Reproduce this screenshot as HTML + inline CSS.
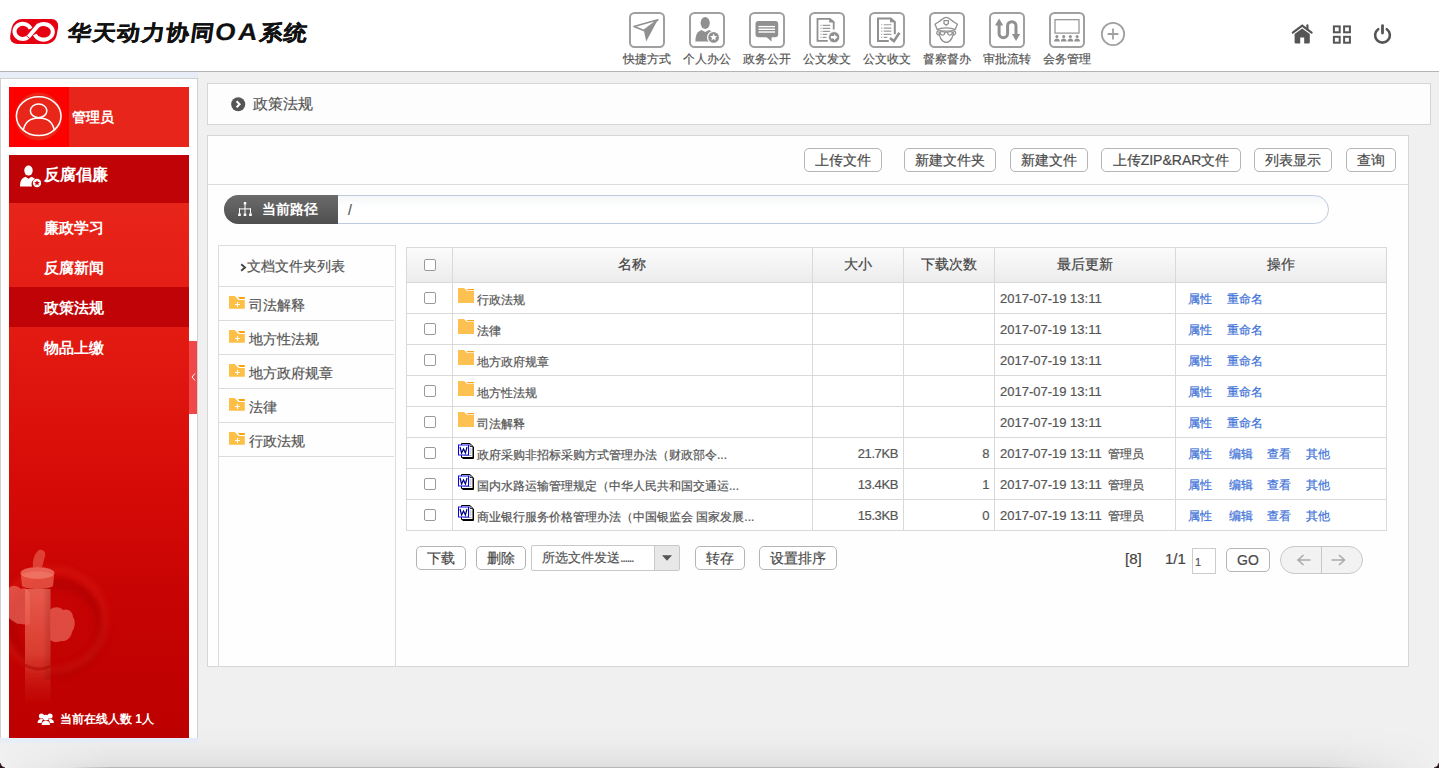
<!DOCTYPE html>
<html><head><meta charset="utf-8">
<style>
*{box-sizing:border-box}
html,body{margin:0;padding:0}
body{width:1439px;height:768px;overflow:hidden;position:relative;background:#f0f0f0;font-family:"Liberation Sans",sans-serif;color:#555;-webkit-text-stroke:0.2px currentColor}
.abs{position:absolute}
#hdr{left:0;top:0;width:1439px;height:71px;background:#fff}
#hdrline{left:0;top:71px;width:1439px;height:1px;background:#b4b4b4}
.nav{position:absolute;top:12px;width:60px;text-align:center}
.nav .ib{position:absolute;left:12px;top:0;width:36px;height:36px;border:2px solid #a0a0a0;border-radius:5.5px}
.nav .lb{position:absolute;left:0;top:40px;width:60px;font-size:12px;line-height:14px;color:#555;white-space:nowrap;text-align:center}
.nav svg{position:absolute;left:0;top:0}
#band{left:0;top:72px;width:198px;height:671px;background:#e8eef8}
#lp{left:0;top:78px;width:198px;height:660px;background:#fff;border:1px solid #d0d0d0;border-bottom:0}
.red{position:absolute;left:9px;width:180px}
#rtop{top:87px;height:60px;background:#e8251a}
#ravatar{left:9px;top:87px;width:60px;height:60px;background:#fe0000}
#rsec{top:155px;height:48px;background:#c00306}
#rsub{top:203px;height:535px;background:linear-gradient(to bottom,#e8251a 0%,#e21a12 25%,#d80c08 50%,#c60303 75%,#bd0000 100%)}
.sm{position:absolute;left:44px;font-size:15px;font-weight:bold;color:#fff;line-height:20px;white-space:nowrap;-webkit-text-stroke:0}
#bc{left:207px;top:83px;width:1224px;height:42px;background:#fdfdfd;border:1px solid #d6d6d6}
#main{left:207px;top:135px;width:1202px;height:532px;background:#fefefe;border:1px solid #d6d6d6}
.btn{position:absolute;height:24px;border:1px solid #b4b4b4;border-radius:5px;background:#fff;font-size:14px;line-height:22px;color:#4a4a4a;text-align:center;white-space:nowrap}
.th{position:absolute;font-size:14px;line-height:20px;color:#444;text-align:center;white-space:nowrap}
.td{position:absolute;font-size:12px;line-height:18px;color:#555;white-space:nowrap}
.lk{color:#3d72d8}
.num{font-size:13px;line-height:20px;letter-spacing:-0.4px}
.dt{font-size:13px;line-height:20px}
.cb{position:absolute;width:12px;height:12px;border:1px solid #9a9a9a;border-radius:2px;background:#fff}
</style></head><body>
<div id="hdr" class="abs"></div>
<div id="hdrline" class="abs"></div>

<svg class="abs" style="left:8px;top:19px" width="52" height="26" viewBox="-1 0 52 26">
 <g transform="translate(5,0) skewX(-11)"><rect x="-0.6" y="0.1" width="46.4" height="24.8" rx="8.5" fill="#e50012"/></g>
 <g fill="none" stroke-linecap="butt">
  <path d="M21.6 9.8 A8.3 7.6 0 1 0 19.1 18.2" stroke="#fff" stroke-width="4"/>
  <path d="M21.2 15.7 L26.5 9.5" stroke="#e50012" stroke-width="5.6"/>
  <path d="M19.1 18.2 L29.2 6.4 A9.3 7.8 0 1 1 25.8 15.5" stroke="#fff" stroke-width="4"/>
  <path d="M17.3 16.7 L20.9 19.7" stroke="#e50012" stroke-width="0.8"/>
 </g>
</svg>
<div class="abs" style="left:66px;top:18px;font-size:21px;line-height:28px;font-weight:bold;color:#111;white-space:nowrap;letter-spacing:1.3px;transform:skewX(-8deg) scaleX(1.1);transform-origin:0 100%;-webkit-text-stroke:0.35px #111">华天动力协同<span style="font-size:24px;letter-spacing:2.2px;-webkit-text-stroke:0.2px #111">OA</span>系统</div>

<div class="nav" style="left:617px"><div class="ib"></div><svg style="left:12px" width="36" height="36" viewBox="0 0 36 36">
 <path d="M28.8 7.8 L5 14.6 L14.9 18.4 Z" fill="none" stroke="#909090" stroke-width="1.6" stroke-linejoin="round"/>
 <path d="M28.8 7.8 L14.9 18.4 L17.2 29.6 Z" fill="#909090"/>
</svg><div class="lb">快捷方式</div></div>

<div class="nav" style="left:677px"><div class="ib"></div><svg style="left:12px" width="36" height="36" viewBox="0 0 36 36">
 <ellipse cx="16.2" cy="11" rx="4.6" ry="6" fill="#909090"/>
 <path d="M6.4 29.6 C6.6 22 8.5 19.6 12.5 18 L16.2 20 L20 18 C23.5 19.2 25 20.5 25.5 23 L25.5 29.6 Z" fill="#909090"/>
 <circle cx="24.6" cy="25.4" r="6" fill="#909090" stroke="#fff" stroke-width="1.3"/>
 <path d="M24.6 21.6 L25.6 24.1 L28.2 24.2 L26.2 25.9 L26.9 28.5 L24.6 27 L22.3 28.5 L23 25.9 L21 24.2 L23.6 24.1 Z" fill="#fff"/>
</svg><div class="lb">个人办公</div></div>

<div class="nav" style="left:737px"><div class="ib"></div><svg style="left:12px" width="36" height="36" viewBox="0 0 36 36">
 <rect x="6.5" y="9" width="22.7" height="16.2" rx="3" fill="#909090"/>
 <path d="M17.2 24.8 L22.4 29.5 L22.7 24.8 Z" fill="#909090"/>
 <rect x="9.5" y="13.9" width="16.5" height="1.4" fill="#fff"/><rect x="9.5" y="16.6" width="16.5" height="1.4" fill="#fff"/><rect x="9.5" y="19.3" width="16.5" height="1.4" fill="#fff"/>
</svg><div class="lb">政务公开</div></div>

<div class="nav" style="left:797px"><div class="ib"></div><svg style="left:12px" width="36" height="36" viewBox="0 0 36 36">
 <path d="M24.7 17.6 V10 L20.8 6.9 H8.5 V28.9 H18.8" fill="none" stroke="#909090" stroke-width="1.8"/>
 <path d="M20.2 6 L25.6 10.4 H20.2 Z" fill="#909090"/>
 <g stroke="#9a9a9a" stroke-width="1.1"><path d="M11.4 13.4 h1.2 M11.4 16.4 h1.2 M11.4 19.4 h1.2 M11.4 22.4 h1.2 M11.4 25.4 h1.2" stroke="#b0b0b0"/>
 <path d="M13.6 13.4 H21.3 M13.6 16.4 H21.3 M13.6 19.4 H21 M13.6 22.4 H18.3 M13.6 25.4 H17.5"/></g>
 <circle cx="25.1" cy="25.2" r="5.6" fill="#909090" stroke="#fff" stroke-width="0.8"/>
 <path d="M21.8 24 H25 V22.2 L28.5 25.2 L25 28.2 V26.4 H21.8 Z" fill="#fff"/>
</svg><div class="lb">公文发文</div></div>

<div class="nav" style="left:857px"><div class="ib"></div><svg style="left:12px" width="36" height="36" viewBox="0 0 36 36">
 <path d="M25.8 22.2 V10 L21.6 6.5 H9 V28.9 H19.8" fill="none" stroke="#909090" stroke-width="2"/>
 <path d="M21 5.5 L26.6 10.2 H21 Z" fill="#909090"/>
 <g stroke-width="1.1"><path d="M12 12.8 h1.4 M12 16.1 h1.4 M12 19.1 h1.4 M12 22.4 h1.4 M12 25.4 h1.4" stroke="#b8b8b8"/>
 <path d="M14.7 12.8 H22.4 M14.7 16.1 H22.4 M14.7 19.1 H22.4 M14.7 22.4 H22.4 M14.7 25.4 H18.3" stroke="#9a9a9a"/></g>
 <path d="M21 26 L24.9 29.2 L30.4 20.8" fill="none" stroke="#fff" stroke-width="4.2"/>
 <path d="M21 26 L24.9 29.2 L30.4 20.8" fill="none" stroke="#909090" stroke-width="2.6"/>
</svg><div class="lb">公文收文</div></div>

<div class="nav" style="left:917px"><div class="ib"></div><svg style="left:12px" width="36" height="36" viewBox="0 0 36 36">
 <g fill="none" stroke="#909090" stroke-width="1.3" stroke-linejoin="round">
 <path d="M6 12.3 C8.2 10.6 10.4 9.8 12.2 8 C14 6.2 15.5 5.3 17.2 5.3 C18.9 5.3 20.4 6.2 22.2 8 C24 9.8 26.2 10.6 28.4 12.3 L26.2 17.5 C22 15.3 12.4 15.3 8.2 17.5 Z"/>
 <path d="M15 8.6 H19.4 V11.4 L17.2 13.2 L15 11.4 Z"/>
 <path d="M8.2 17.5 C12.4 19.8 22 19.8 26.2 17.5"/>
 <path d="M9.6 19 C8 19 7.4 20.6 8 21.8 C8.4 22.8 9.6 23.2 10.4 22.8 M24.8 19 C26.4 19 27 20.6 26.4 21.8 C26 22.8 24.8 23.2 24 22.8"/>
 <path d="M10 19.4 C10 24 12 29.6 17.2 30.4 C22.4 29.6 24.4 24 24.4 19.4"/>
 <path d="M11 20 C11 23.6 15.6 24.4 15.8 20.6 C15.8 19.8 14.5 19.6 13 19.6 C11.8 19.6 11 19.7 11 20 Z M23.4 20 C23.4 23.6 18.8 24.4 18.6 20.6 C18.6 19.8 19.9 19.6 21.4 19.6 C22.6 19.6 23.4 19.7 23.4 20 Z M15.8 20.4 C16.6 20 17.8 20 18.6 20.4"/>
 </g>
</svg><div class="lb">督察督办</div></div>

<div class="nav" style="left:977px"><div class="ib"></div><svg style="left:12px" width="36" height="36" viewBox="0 0 36 36">
 <path d="M10.1 12.5 V21.55 A4.25 4.25 0 0 0 18.6 21.55 V13.9 A4.2 4.2 0 0 1 27 13.9 V22.6" fill="none" stroke="#909090" stroke-width="3"/>
 <path d="M6 13.4 L10.1 6.6 L14.2 13.4 Z" fill="#909090"/>
 <path d="M23 22.1 L27 28.9 L31.2 22.1 Z" fill="#909090"/>
</svg><div class="lb">审批流转</div></div>

<div class="nav" style="left:1037px"><div class="ib"></div><svg style="left:12px" width="36" height="36" viewBox="0 0 36 36">
 <rect x="6" y="7.7" width="24" height="13.4" fill="none" stroke="#909090" stroke-width="1.2"/>
 <g fill="#909090"><circle cx="7.9" cy="24.4" r="1.5"/><path d="M5.0 29.4 C5.3 27.4 6.3 26.6 7.9 26.6 C9.5 26.6 10.5 27.4 10.8 29.4 Z"/><circle cx="14.7" cy="24.4" r="1.5"/><path d="M11.8 29.4 C12.1 27.4 13.1 26.6 14.7 26.6 C16.3 26.6 17.3 27.4 17.6 29.4 Z"/><circle cx="21.4" cy="24.4" r="1.5"/><path d="M18.5 29.4 C18.8 27.4 19.8 26.6 21.4 26.6 C23.0 26.6 24.0 27.4 24.3 29.4 Z"/><circle cx="28.1" cy="24.4" r="1.5"/><path d="M25.2 29.4 C25.5 27.4 26.5 26.6 28.1 26.6 C29.7 26.6 30.7 27.4 31.0 29.4 Z"/></g>
</svg><div class="lb">会务管理</div></div>

<svg class="abs" style="left:1100px;top:21px" width="26" height="26" viewBox="0 0 26 26">
 <circle cx="13" cy="13" r="11.2" fill="none" stroke="#a0a0a0" stroke-width="1.8"/>
 <path d="M13 7.6 V18.4 M7.6 13 H18.4" stroke="#a0a0a0" stroke-width="1.8"/>
</svg>

<svg class="abs" style="left:1291px;top:24px" width="24" height="21" viewBox="0 0 24 21">
 <path d="M1.8 8.6 L11.2 1.6 L20.6 8.6" fill="none" stroke="#555" stroke-width="2.2" stroke-linecap="round"/>
 <path d="M16.4 1.4 V5.6" stroke="#555" stroke-width="2.2" stroke-linecap="round"/>
 <path d="M3.6 10 L11.2 4.4 L18.8 10 V18.2 Q18.8 19.6 17.4 19.6 H13.2 V13.6 H9.2 V19.6 H5 Q3.6 19.6 3.6 18.2 Z" fill="#555"/>
</svg>
<svg class="abs" style="left:1332px;top:25px" width="21" height="20" viewBox="0 0 21 20">
 <g fill="none" stroke="#555" stroke-width="2">
  <rect x="1.9" y="1.4" width="5.8" height="5.9"/><rect x="12.1" y="1.4" width="5.8" height="5.9"/>
  <rect x="1.9" y="11.8" width="5.8" height="5.9"/><rect x="12.1" y="11.8" width="5.8" height="5.9"/>
 </g>
</svg>
<svg class="abs" style="left:1373px;top:24px" width="20" height="21" viewBox="0 0 20 21">
 <path d="M5.2 5.2 A7.4 7.4 0 1 0 13.8 5.2" fill="none" stroke="#555" stroke-width="2.6" stroke-linecap="round"/>
 <path d="M9.5 1.6 V9" stroke="#555" stroke-width="2.8" stroke-linecap="round"/>
</svg>

<div id="band" class="abs"></div>
<div id="lp" class="abs"></div>
<div id="rtop" class="red"></div>
<div id="ravatar" class="abs"></div>
<div id="rsec" class="red"></div>
<div id="rsub" class="red"></div>

<svg class="abs" style="left:9px;top:87px" width="60" height="60" viewBox="0 0 60 60">
 <ellipse cx="29.7" cy="29.6" rx="23.6" ry="24" fill="#e8271a"/>
 <ellipse cx="29.7" cy="29.1" rx="22.3" ry="19.4" fill="none" stroke="#fff" stroke-width="1.5"/>
 <ellipse cx="29.6" cy="23.8" rx="8.25" ry="6.85" fill="none" stroke="#fff" stroke-width="1.5"/>
 <path d="M14.4 42.6 C16.2 34.4 22 30.9 29.8 30.9 C37.6 30.9 43.4 34.4 45.2 42.6" fill="none" stroke="#fff" stroke-width="1.5"/>
</svg>
<div class="abs" style="left:72px;top:107px;font-size:14px;line-height:20px;font-weight:bold;color:#fff;-webkit-text-stroke:0">管理员</div>
<svg class="abs" style="left:19px;top:165px" width="22" height="23" viewBox="0 0 22 23">
 <ellipse cx="9.5" cy="5.6" rx="4.2" ry="5" fill="#fff"/>
 <path d="M1 21.5 C1 15 3.5 12.6 6.6 11.8 L9.5 13.8 L12.4 11.8 C14 12.3 15.2 13 16 14 A5.6 5.6 0 0 0 13 21.5 Z" fill="#fff"/>
 <circle cx="18" cy="18" r="4.2" fill="#fff"/>
 <path d="M18 15.2 L18.8 17.1 L20.8 17.2 L19.3 18.5 L19.8 20.4 L18 19.3 L16.2 20.4 L16.7 18.5 L15.2 17.2 L17.2 17.1 Z" fill="#c00306"/>
</svg>
<div class="abs" style="left:44px;top:164px;font-size:16px;line-height:22px;font-weight:bold;color:#fff;-webkit-text-stroke:0">反腐倡廉</div>
<div class="abs" style="left:9px;top:287px;width:180px;height:40px;background:#c00306"></div>
<svg class="abs" style="left:9px;top:520px" width="180" height="218" viewBox="0 0 180 218">
 <defs>
  <filter id="bl" x="-50%" y="-50%" width="200%" height="200%"><feGaussianBlur stdDeviation="3"/></filter>
  <filter id="bl2" x="-20%" y="-20%" width="140%" height="140%"><feGaussianBlur stdDeviation="0.6"/></filter>
  <linearGradient id="pg" x1="0" y1="0" x2="0" y2="1"><stop offset="0" stop-color="#f07060"/><stop offset="0.5" stop-color="#e04a3a"/><stop offset="0.92" stop-color="#c81a10" stop-opacity="0"/></linearGradient>
  <linearGradient id="ph" x1="0" y1="0" x2="1" y2="0"><stop offset="0" stop-color="#000" stop-opacity="0"/><stop offset="0.7" stop-color="#000" stop-opacity="0"/><stop offset="1" stop-color="#800" stop-opacity="0.35"/></linearGradient>
 </defs>
 <ellipse cx="48" cy="108" rx="44" ry="44" fill="none" stroke="#a80000" stroke-width="10" opacity="0.55" filter="url(#bl)"/>
 <ellipse cx="44" cy="100" rx="52" ry="50" fill="none" stroke="#e82a1a" stroke-width="6" opacity="0.35" filter="url(#bl)"/>
 <g filter="url(#bl2)">
 <path d="M0 68 C4 64 9 66 12 69 C16 67 20 70 21 74 L21 104 C17 106 12 103 9 104 C5 102 2 100 0 98 Z" fill="#f07a6a" opacity="0.6"/>
 <path d="M41 90 C45 86 51 87 54 90 C59 88 64 92 64 97 C67 101 66 108 63 112 C62 118 57 122 52 121 C48 123 44 122 41 120 Z" fill="#f07a6a" opacity="0.6"/>
 <path d="M16 69 L41.5 69 L41.5 200 L16 200 Z" fill="url(#pg)" opacity="0.8"/>
 <path d="M16 69 L41.5 69 L41.5 160 L16 160 Z" fill="url(#ph)" opacity="0.6"/>
 <path d="M12 56 C12 50 45 50 45 56 L44 66 C40 70 17 70 13 66 Z" fill="#ec6250" opacity="0.75"/>
 <ellipse cx="28.5" cy="53" rx="17" ry="6" fill="#f27c6c" opacity="0.75"/>
 <path d="M24 47 C23 40 26 33 30 30 C34 29 37 32 36 36 C35 40 34 44 33 47 Z" fill="#e8604e" opacity="0.65"/>
 <path d="M16 145 C25 150 34 150 42 146" fill="none" stroke="#b00808" stroke-width="3" opacity="0.55"/>
 </g>
</svg>
<div class="sm" style="top:218px">廉政学习</div>
<div class="sm" style="top:258px">反腐新闻</div>
<div class="sm" style="top:298px">政策法规</div>
<div class="sm" style="top:338px">物品上缴</div>
<div class="abs" style="left:189px;top:341px;width:8px;height:73px;background:#f04848"></div>
<svg class="abs" style="left:189px;top:370px" width="8" height="14" viewBox="0 0 8 14"><path d="M6 3.5 L3 7 L6 10.5" fill="none" stroke="#fff" stroke-width="1"/></svg>
<svg class="abs" style="left:36px;top:712px" width="20" height="14" viewBox="0 0 20 14">
 <g fill="#fff">
  <circle cx="5.5" cy="4" r="2.6"/><circle cx="14" cy="4" r="2.6"/>
  <circle cx="9.8" cy="5.6" r="2.9"/>
  <path d="M1.6 11 C1.6 8 3.2 7 5.5 7 C6.3 7 7 7.2 7.5 7.5 C6 8.6 5.6 10 5.6 11 Z"/>
  <path d="M17.9 11 C17.9 8 16.3 7 14 7 C13.2 7 12.5 7.2 12 7.5 C13.5 8.6 13.9 10 13.9 11 Z"/>
  <path d="M5.6 13 C5.6 10 7.4 8.8 9.8 8.8 C12.2 8.8 14 10 14 13 Z"/>
 </g>
</svg>
<div class="abs" style="left:60px;top:710px;font-size:12px;line-height:18px;font-weight:bold;color:#fff;white-space:nowrap;-webkit-text-stroke:0">当前在线人数 1人</div>

<div id="bc" class="abs"></div>
<div id="main" class="abs"></div>

<svg class="abs" style="left:231px;top:97px" width="15" height="15" viewBox="0 0 15 15">
 <circle cx="7.2" cy="7.2" r="7" fill="#555"/>
 <path d="M5.6 4.2 L8.6 7.2 L5.6 10.2" fill="none" stroke="#fff" stroke-width="2"/>
</svg>
<div class="abs" style="left:253px;top:93px;font-size:15px;line-height:22px;color:#555">政策法规</div>

<div class="btn" style="left:804px;top:148px;width:78px">上传文件</div>
<div class="btn" style="left:904px;top:148px;width:92px">新建文件夹</div>
<div class="btn" style="left:1010px;top:148px;width:78px">新建文件</div>
<div class="btn" style="left:1101px;top:148px;width:140px">上传ZIP&amp;RAR文件</div>
<div class="btn" style="left:1254px;top:148px;width:78px">列表显示</div>
<div class="btn" style="left:1346px;top:148px;width:50px">查询</div>
<div class="abs" style="left:208px;top:184px;width:1200px;height:1px;background:#dcdcdc"></div>

<div class="abs" style="left:224px;top:195px;width:1105px;height:29px;border:1px solid #bccbde;border-radius:15px;background:linear-gradient(#f4f6f8,#fff 40%)"></div>
<div class="abs" style="left:224px;top:195px;width:114px;height:29px;border-radius:15px 0 0 15px;background:linear-gradient(#6b6b6b,#4f4f4f)"></div>
<svg class="abs" style="left:237px;top:201px" width="16" height="17" viewBox="0 0 16 17">
 <g fill="#fff"><rect x="6.8" y="1" width="2.4" height="2.6"/><rect x="7.5" y="3.4" width="1" height="4.4"/>
 <rect x="2" y="7.4" width="12" height="1"/><rect x="2" y="7.4" width="1" height="5"/><rect x="7.5" y="7.4" width="1" height="5"/><rect x="13" y="7.4" width="1" height="5"/>
 <rect x="1.2" y="12.4" width="2.6" height="2.6"/><rect x="6.7" y="12.4" width="2.6" height="2.6"/><rect x="12.2" y="12.4" width="2.6" height="2.6"/></g>
</svg>
<div class="abs" style="left:262px;top:198px;font-size:14px;line-height:22px;font-weight:bold;color:#fff;-webkit-text-stroke:0">当前路径</div>
<div class="abs" style="left:348px;top:199px;font-size:14px;line-height:22px;color:#555">/</div>

<div class="abs" style="left:218px;top:245px;width:178px;height:422px;border-left:1px solid #dcdcdc;border-right:1px solid #dcdcdc;border-top:1px solid #dcdcdc"></div>
<svg class="abs" style="left:240px;top:263px" width="7" height="9" viewBox="0 0 7 9"><path d="M1.2 1.2 L5 4.5 L1.2 7.8" fill="none" stroke="#444" stroke-width="1.9"/></svg>
<div class="abs" style="left:247px;top:255px;font-size:14.4px;line-height:22px;color:#555;white-space:nowrap">文档文件夹列表</div>
<div class="abs" style="left:219px;top:286px;width:175px;height:1px;background:#dcdcdc"></div>
<svg class="abs" style="left:229px;top:296px" width="16" height="13" viewBox="0 0 16 13"><path d="M0 0 H5.7 L9.4 3.9 H15.8 V12.7 H0 Z" fill="#fdbf45"/><path d="M8.8 0.9 H15.8 V2.9 H10.7 Z" fill="#fda40c"/><path d="M8.5 5.9 V11 M6 8.5 H11" stroke="#fff" stroke-width="1.1"/></svg>
<div class="abs" style="left:249px;top:294px;font-size:14px;line-height:22px;color:#555;white-space:nowrap">司法解释</div>
<div class="abs" style="left:219px;top:320px;width:175px;height:1px;background:#dcdcdc"></div>
<svg class="abs" style="left:229px;top:330px" width="16" height="13" viewBox="0 0 16 13"><path d="M0 0 H5.7 L9.4 3.9 H15.8 V12.7 H0 Z" fill="#fdbf45"/><path d="M8.8 0.9 H15.8 V2.9 H10.7 Z" fill="#fda40c"/><path d="M8.5 5.9 V11 M6 8.5 H11" stroke="#fff" stroke-width="1.1"/></svg>
<div class="abs" style="left:249px;top:328px;font-size:14px;line-height:22px;color:#555;white-space:nowrap">地方性法规</div>
<div class="abs" style="left:219px;top:354px;width:175px;height:1px;background:#dcdcdc"></div>
<svg class="abs" style="left:229px;top:364px" width="16" height="13" viewBox="0 0 16 13"><path d="M0 0 H5.7 L9.4 3.9 H15.8 V12.7 H0 Z" fill="#fdbf45"/><path d="M8.8 0.9 H15.8 V2.9 H10.7 Z" fill="#fda40c"/><path d="M8.5 5.9 V11 M6 8.5 H11" stroke="#fff" stroke-width="1.1"/></svg>
<div class="abs" style="left:249px;top:362px;font-size:14px;line-height:22px;color:#555;white-space:nowrap">地方政府规章</div>
<div class="abs" style="left:219px;top:388px;width:175px;height:1px;background:#dcdcdc"></div>
<svg class="abs" style="left:229px;top:398px" width="16" height="13" viewBox="0 0 16 13"><path d="M0 0 H5.7 L9.4 3.9 H15.8 V12.7 H0 Z" fill="#fdbf45"/><path d="M8.8 0.9 H15.8 V2.9 H10.7 Z" fill="#fda40c"/><path d="M8.5 5.9 V11 M6 8.5 H11" stroke="#fff" stroke-width="1.1"/></svg>
<div class="abs" style="left:249px;top:396px;font-size:14px;line-height:22px;color:#555;white-space:nowrap">法律</div>
<div class="abs" style="left:219px;top:422px;width:175px;height:1px;background:#dcdcdc"></div>
<svg class="abs" style="left:229px;top:432px" width="16" height="13" viewBox="0 0 16 13"><path d="M0 0 H5.7 L9.4 3.9 H15.8 V12.7 H0 Z" fill="#fdbf45"/><path d="M8.8 0.9 H15.8 V2.9 H10.7 Z" fill="#fda40c"/><path d="M8.5 5.9 V11 M6 8.5 H11" stroke="#fff" stroke-width="1.1"/></svg>
<div class="abs" style="left:249px;top:430px;font-size:14px;line-height:22px;color:#555;white-space:nowrap">行政法规</div>
<div class="abs" style="left:219px;top:456px;width:175px;height:1px;background:#dcdcdc"></div>

<div class="abs" style="left:406px;top:247px;width:981px;height:35px;background:linear-gradient(#fcfcfc,#ececec)"></div>
<div class="abs" style="left:407px;top:282px;width:979px;height:248px;background:#fff"></div>
<div class="abs" style="left:406px;top:247px;width:1px;height:284px;background:#d9d9d9"></div>
<div class="abs" style="left:452px;top:247px;width:1px;height:284px;background:#d9d9d9"></div>
<div class="abs" style="left:812px;top:247px;width:1px;height:284px;background:#d9d9d9"></div>
<div class="abs" style="left:903px;top:247px;width:1px;height:284px;background:#d9d9d9"></div>
<div class="abs" style="left:994px;top:247px;width:1px;height:284px;background:#d9d9d9"></div>
<div class="abs" style="left:1175px;top:247px;width:1px;height:284px;background:#d9d9d9"></div>
<div class="abs" style="left:1386px;top:247px;width:1px;height:284px;background:#d9d9d9"></div>
<div class="abs" style="left:406px;top:247px;width:981px;height:1px;background:#d9d9d9"></div>
<div class="abs" style="left:406px;top:282px;width:981px;height:1px;background:#d9d9d9"></div>
<div class="abs" style="left:406px;top:313px;width:981px;height:1px;background:#d9d9d9"></div>
<div class="abs" style="left:406px;top:344px;width:981px;height:1px;background:#d9d9d9"></div>
<div class="abs" style="left:406px;top:375px;width:981px;height:1px;background:#d9d9d9"></div>
<div class="abs" style="left:406px;top:406px;width:981px;height:1px;background:#d9d9d9"></div>
<div class="abs" style="left:406px;top:437px;width:981px;height:1px;background:#d9d9d9"></div>
<div class="abs" style="left:406px;top:468px;width:981px;height:1px;background:#d9d9d9"></div>
<div class="abs" style="left:406px;top:499px;width:981px;height:1px;background:#d9d9d9"></div>
<div class="abs" style="left:406px;top:530px;width:981px;height:1px;background:#d9d9d9"></div>
<div class="th" style="left:452px;top:254px;width:360px">名称</div>
<div class="th" style="left:812px;top:254px;width:91px">大小</div>
<div class="th" style="left:903px;top:254px;width:91px">下载次数</div>
<div class="th" style="left:994px;top:254px;width:181px">最后更新</div>
<div class="th" style="left:1175px;top:254px;width:211px">操作</div>
<div class="cb" style="left:424px;top:259px"></div>
<div class="cb" style="left:424px;top:292px"></div>
<svg class="abs" style="left:458px;top:288px" width="16" height="15" viewBox="0 0 16 15"><path d="M0 0 H6 L9.2 3 H16 V15 H0 Z" fill="#fdc152"/><path d="M8.4 0.9 H16 V2.3 H9.9 Z" fill="#f6a41c"/></svg>
<div class="td" style="left:477px;top:291px">行政法规</div>
<div class="td dt" style="left:1000px;top:289px">2017-07-19 13:11</div>
<div class="td lk" style="left:1188px;top:290px">属性</div>
<div class="td lk" style="left:1227px;top:290px">重命名</div>
<div class="cb" style="left:424px;top:323px"></div>
<svg class="abs" style="left:458px;top:319px" width="16" height="15" viewBox="0 0 16 15"><path d="M0 0 H6 L9.2 3 H16 V15 H0 Z" fill="#fdc152"/><path d="M8.4 0.9 H16 V2.3 H9.9 Z" fill="#f6a41c"/></svg>
<div class="td" style="left:477px;top:322px">法律</div>
<div class="td dt" style="left:1000px;top:320px">2017-07-19 13:11</div>
<div class="td lk" style="left:1188px;top:321px">属性</div>
<div class="td lk" style="left:1227px;top:321px">重命名</div>
<div class="cb" style="left:424px;top:354px"></div>
<svg class="abs" style="left:458px;top:350px" width="16" height="15" viewBox="0 0 16 15"><path d="M0 0 H6 L9.2 3 H16 V15 H0 Z" fill="#fdc152"/><path d="M8.4 0.9 H16 V2.3 H9.9 Z" fill="#f6a41c"/></svg>
<div class="td" style="left:477px;top:353px">地方政府规章</div>
<div class="td dt" style="left:1000px;top:351px">2017-07-19 13:11</div>
<div class="td lk" style="left:1188px;top:352px">属性</div>
<div class="td lk" style="left:1227px;top:352px">重命名</div>
<div class="cb" style="left:424px;top:385px"></div>
<svg class="abs" style="left:458px;top:381px" width="16" height="15" viewBox="0 0 16 15"><path d="M0 0 H6 L9.2 3 H16 V15 H0 Z" fill="#fdc152"/><path d="M8.4 0.9 H16 V2.3 H9.9 Z" fill="#f6a41c"/></svg>
<div class="td" style="left:477px;top:384px">地方性法规</div>
<div class="td dt" style="left:1000px;top:382px">2017-07-19 13:11</div>
<div class="td lk" style="left:1188px;top:383px">属性</div>
<div class="td lk" style="left:1227px;top:383px">重命名</div>
<div class="cb" style="left:424px;top:416px"></div>
<svg class="abs" style="left:458px;top:412px" width="16" height="15" viewBox="0 0 16 15"><path d="M0 0 H6 L9.2 3 H16 V15 H0 Z" fill="#fdc152"/><path d="M8.4 0.9 H16 V2.3 H9.9 Z" fill="#f6a41c"/></svg>
<div class="td" style="left:477px;top:415px">司法解释</div>
<div class="td dt" style="left:1000px;top:413px">2017-07-19 13:11</div>
<div class="td lk" style="left:1188px;top:414px">属性</div>
<div class="td lk" style="left:1227px;top:414px">重命名</div>
<div class="cb" style="left:424px;top:447px"></div>
<svg class="abs" style="left:458px;top:443px" width="16" height="16" viewBox="0 0 16 16"><path d="M3.5 0.5 H12 L15 3.5 V14.5 H3.5 Z" fill="#fff" stroke="#000" stroke-width="1"/><path d="M15.5 4 V15.5 H4.5" fill="none" stroke="#000" stroke-width="1"/><path d="M12 0.5 V3.5 H15" fill="none" stroke="#000" stroke-width="0.8"/><path d="M11.5 6 H13.5 M11.5 8 H13.5 M11.5 10 H13.5 M5.5 12.5 H13.5" stroke="#999" stroke-width="0.9"/><rect x="0.5" y="2" width="10" height="10" fill="#fff" stroke="#0000f0" stroke-width="1"/><path d="M0.5 2 h1 M2.5 2 h1 M4.5 2 h1 M6.5 2 h1 M8.5 2 h1 M0.5 12 h1 M2.5 12 h1 M4.5 12 h1 M6.5 12 h1 M8.5 12 h1" stroke="#fff" stroke-width="0.5" opacity="0.5"/><path d="M2 4 L3.6 10 L5.5 6 L7.4 10 L9 4" fill="none" stroke="#000080" stroke-width="1.2"/></svg>
<div class="td" style="left:477px;top:446px">政府采购非招标采购方式管理办法（财政部令...</div>
<div class="td num" style="left:812px;top:444px;width:86px;text-align:right">21.7KB</div>
<div class="td num" style="left:903px;top:444px;width:86px;text-align:right">8</div>
<div class="td dt" style="left:1000px;top:444px">2017-07-19 13:11</div>
<div class="td" style="left:1108px;top:445px">管理员</div>
<div class="td lk" style="left:1188px;top:445px">属性</div>
<div class="td lk" style="left:1229px;top:445px">编辑</div>
<div class="td lk" style="left:1267px;top:445px">查看</div>
<div class="td lk" style="left:1306px;top:445px">其他</div>
<div class="cb" style="left:424px;top:478px"></div>
<svg class="abs" style="left:458px;top:474px" width="16" height="16" viewBox="0 0 16 16"><path d="M3.5 0.5 H12 L15 3.5 V14.5 H3.5 Z" fill="#fff" stroke="#000" stroke-width="1"/><path d="M15.5 4 V15.5 H4.5" fill="none" stroke="#000" stroke-width="1"/><path d="M12 0.5 V3.5 H15" fill="none" stroke="#000" stroke-width="0.8"/><path d="M11.5 6 H13.5 M11.5 8 H13.5 M11.5 10 H13.5 M5.5 12.5 H13.5" stroke="#999" stroke-width="0.9"/><rect x="0.5" y="2" width="10" height="10" fill="#fff" stroke="#0000f0" stroke-width="1"/><path d="M0.5 2 h1 M2.5 2 h1 M4.5 2 h1 M6.5 2 h1 M8.5 2 h1 M0.5 12 h1 M2.5 12 h1 M4.5 12 h1 M6.5 12 h1 M8.5 12 h1" stroke="#fff" stroke-width="0.5" opacity="0.5"/><path d="M2 4 L3.6 10 L5.5 6 L7.4 10 L9 4" fill="none" stroke="#000080" stroke-width="1.2"/></svg>
<div class="td" style="left:477px;top:477px">国内水路运输管理规定（中华人民共和国交通运...</div>
<div class="td num" style="left:812px;top:475px;width:86px;text-align:right">13.4KB</div>
<div class="td num" style="left:903px;top:475px;width:86px;text-align:right">1</div>
<div class="td dt" style="left:1000px;top:475px">2017-07-19 13:11</div>
<div class="td" style="left:1108px;top:476px">管理员</div>
<div class="td lk" style="left:1188px;top:476px">属性</div>
<div class="td lk" style="left:1229px;top:476px">编辑</div>
<div class="td lk" style="left:1267px;top:476px">查看</div>
<div class="td lk" style="left:1306px;top:476px">其他</div>
<div class="cb" style="left:424px;top:509px"></div>
<svg class="abs" style="left:458px;top:505px" width="16" height="16" viewBox="0 0 16 16"><path d="M3.5 0.5 H12 L15 3.5 V14.5 H3.5 Z" fill="#fff" stroke="#000" stroke-width="1"/><path d="M15.5 4 V15.5 H4.5" fill="none" stroke="#000" stroke-width="1"/><path d="M12 0.5 V3.5 H15" fill="none" stroke="#000" stroke-width="0.8"/><path d="M11.5 6 H13.5 M11.5 8 H13.5 M11.5 10 H13.5 M5.5 12.5 H13.5" stroke="#999" stroke-width="0.9"/><rect x="0.5" y="2" width="10" height="10" fill="#fff" stroke="#0000f0" stroke-width="1"/><path d="M0.5 2 h1 M2.5 2 h1 M4.5 2 h1 M6.5 2 h1 M8.5 2 h1 M0.5 12 h1 M2.5 12 h1 M4.5 12 h1 M6.5 12 h1 M8.5 12 h1" stroke="#fff" stroke-width="0.5" opacity="0.5"/><path d="M2 4 L3.6 10 L5.5 6 L7.4 10 L9 4" fill="none" stroke="#000080" stroke-width="1.2"/></svg>
<div class="td" style="left:477px;top:508px">商业银行服务价格管理办法（中国银监会 国家发展...</div>
<div class="td num" style="left:812px;top:506px;width:86px;text-align:right">15.3KB</div>
<div class="td num" style="left:903px;top:506px;width:86px;text-align:right">0</div>
<div class="td dt" style="left:1000px;top:506px">2017-07-19 13:11</div>
<div class="td" style="left:1108px;top:507px">管理员</div>
<div class="td lk" style="left:1188px;top:507px">属性</div>
<div class="td lk" style="left:1229px;top:507px">编辑</div>
<div class="td lk" style="left:1267px;top:507px">查看</div>
<div class="td lk" style="left:1306px;top:507px">其他</div>
<div class="btn" style="left:416px;top:546px;width:50px;height:24px;font-size:14px">下载</div>
<div class="btn" style="left:476px;top:546px;width:50px;height:24px;font-size:14px">删除</div>
<div class="abs" style="left:531px;top:545px;width:149px;height:26px;border:1px solid #c8c8c8;border-radius:2px;background:#fff"></div>
<div class="abs" style="left:654px;top:546px;width:25px;height:24px;background:#e8e8e8;border-left:1px solid #c8c8c8"></div>
<svg class="abs" style="left:661px;top:554px" width="12" height="8" viewBox="0 0 12 8"><path d="M1 1.2 H11 L6 6.8 Z" fill="#555"/></svg>
<div class="abs" style="left:542px;top:549px;font-size:13px;line-height:18px;color:#555;white-space:nowrap">所选文件发送<span style="letter-spacing:-1.4px">......</span></div>
<div class="btn" style="left:695px;top:546px;width:50px;height:24px;font-size:14px">转存</div>
<div class="btn" style="left:759px;top:546px;width:78px;height:24px;font-size:14px">设置排序</div>
<div class="abs" style="left:1125px;top:549px;font-size:15px;line-height:20px;color:#444">[8]</div>
<div class="abs" style="left:1165px;top:549px;font-size:15px;line-height:20px;color:#444">1/1</div>
<div class="abs" style="left:1192px;top:548px;width:24px;height:26px;border:1px solid #ccc;background:#fff"></div>
<div class="abs" style="left:1195px;top:555px;font-size:11px;line-height:14px;color:#555">1</div>
<div class="btn" style="left:1226px;top:548px;width:44px;height:24px;font-size:14px;border-radius:5px">GO</div>
<div class="abs" style="left:1280px;top:546px;width:83px;height:28px;border:1px solid #c8c8c8;border-radius:14px;background:#f2f2f2"></div>
<div class="abs" style="left:1321px;top:547px;width:1px;height:26px;background:#c8c8c8"></div>
<svg class="abs" style="left:1294px;top:552px" width="56" height="16" viewBox="0 0 56 16"><g fill="none" stroke="#aaa" stroke-width="1.6"><path d="M4 8 H16.5 M9.5 3 L4 8 L9.5 13"/><path d="M37.5 8 H50.5 M45 3 L50.5 8 L45 13"/></g></svg>
<div class="abs" style="left:0;top:724px;width:1439px;height:44px;background:linear-gradient(to bottom,rgba(0,0,0,0) 0%,rgba(0,0,0,0.012) 40%,rgba(0,0,0,0.045) 80%,rgba(0,0,0,0.075) 100%);-webkit-mask-image:linear-gradient(to right,transparent 0,#000 110px,#000 1330px,transparent 1439px)"></div>
<div class="abs" style="left:70px;top:767px;width:1295px;height:1px;background:linear-gradient(to right,rgba(0,0,0,0) 0,rgba(0,0,0,0.18) 40px,rgba(0,0,0,0.18) 1240px,rgba(0,0,0,0) 1295px)"></div>
<div class="abs" style="left:0;top:763px;width:5px;height:5px;background:radial-gradient(circle at 100% 0,transparent 3.5px,#2a1010 5px)"></div>
<div class="abs" style="left:1434px;top:763px;width:5px;height:5px;background:radial-gradient(circle at 0 0,transparent 3.5px,#2a1010 5px)"></div>
</body></html>
